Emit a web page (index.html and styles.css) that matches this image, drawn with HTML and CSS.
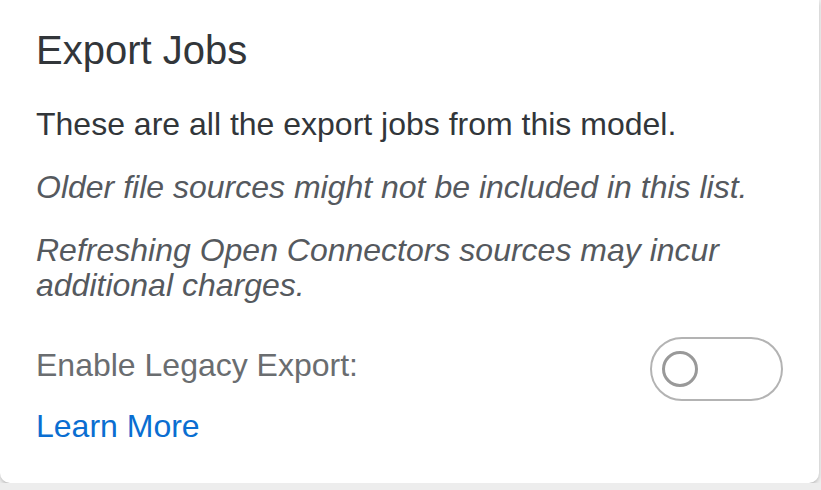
FILE: index.html
```html
<!DOCTYPE html>
<html lang="en">
<head>
    <meta charset="UTF-8">
    <meta name="viewport" content="width=device-width, initial-scale=1.0">
    <title>Export Jobs</title>
    <link rel="stylesheet" href="styles.css">
</head>
<body>
    <div class="export-popover">
        <h2 class="popover-title">Export Jobs</h2>
        <p class="popover-text">These are all the export jobs from this model.</p>
        <p class="popover-note">Older file sources might not be included in this list.</p>
        <p class="popover-note last">Refreshing Open Connectors sources may incur additional charges.</p>
        <div class="legacy-row">
            <label class="legacy-label" for="legacy">Enable Legacy Export:</label>
            <button class="switch" id="legacy" type="button" aria-pressed="false">
                <span class="switch-knob"></span>
            </button>
        </div>
        <a class="learn-more" href="#">Learn More</a>
    </div>
</body>
</html>
```

FILE: styles.css
```css
html, body {
    margin: 0;
    padding: 0;
}
body {
    background: #ededed;
    font-family: "Liberation Sans", Arial, sans-serif;
    color: #32363a;
}
.export-popover {
    width: 747px;
    height: 457px;
    margin-right: 2px;
    padding: 26px 36px 0 36px;
    background: #fff;
    border-radius: 0 0 10px 10px;
    box-shadow: 0 2px 4px -1px rgba(0, 0, 0, 0.3);
}
.popover-title {
    margin: 0 0 33px 0;
    font-size: 40px;
    font-weight: normal;
    line-height: 48px;
    color: #32363a;
}
.popover-text,
.popover-note {
    margin: 0 0 28px 0;
    font-size: 32px;
    line-height: 35px;
}
.popover-note {
    font-style: italic;
    color: #55595e;
}
.popover-note.last { margin-bottom: 34px; }
.legacy-row {
    display: flex;
    justify-content: space-between;
    align-items: flex-start;
}
.legacy-label {
    padding-top: 11px;
    font-size: 32px;
    line-height: 35px;
    color: #6a6d70;
}
.switch {
    display: flex;
    align-items: center;
    width: 133px;
    height: 64px;
    padding: 0 0 0 10px;
    margin-top: 0;
    border: 2px solid #b3b3b3;
    border-radius: 32px;
    background: #fff;
    cursor: pointer;
}
.switch-knob {
    width: 30px;
    height: 30px;
    border: 3px solid #999;
    border-radius: 50%;
}
.learn-more {
    display: block;
    margin-top: 8px;
    font-size: 32px;
    line-height: 35px;
    color: #0a6ed1;
    text-decoration: none;
}
.learn-more:hover { text-decoration: underline; }
```
